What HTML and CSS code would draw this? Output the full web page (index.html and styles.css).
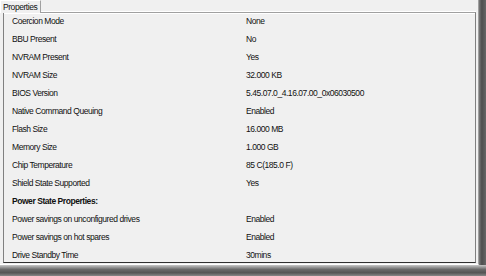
FILE: index.html
```html
<!DOCTYPE html>
<html lang="en">
<head>
    <meta charset="UTF-8">
    <title>Properties</title>
    <link rel="stylesheet" href="styles.css">
</head>
<body>
    <div class="screen">
        <div class="window">
            <!-- Tab strip -->
            <div class="tabs">
                <span class="tab">Properties</span>
            </div>

            <!-- Property list -->
            <div class="panel">
                <div class="row"><span class="label">Coercion Mode</span><span class="value">None</span></div>
                <div class="row"><span class="label">BBU Present</span><span class="value">No</span></div>
                <div class="row"><span class="label">NVRAM Present</span><span class="value">Yes</span></div>
                <div class="row"><span class="label">NVRAM Size</span><span class="value">32.000 KB</span></div>
                <div class="row"><span class="label">BIOS Version</span><span class="value">5.45.07.0_4.16.07.00_0x06030500</span></div>
                <div class="row"><span class="label">Native Command Queuing</span><span class="value">Enabled</span></div>
                <div class="row"><span class="label">Flash Size</span><span class="value">16.000 MB</span></div>
                <div class="row"><span class="label">Memory Size</span><span class="value">1.000 GB</span></div>
                <div class="row"><span class="label">Chip Temperature</span><span class="value">85 C(185.0 F)</span></div>
                <div class="row"><span class="label">Shield State Supported</span><span class="value">Yes</span></div>
                <div class="row heading"><span class="label">Power State Properties:</span></div>
                <div class="row"><span class="label">Power savings on unconfigured drives</span><span class="value">Enabled</span></div>
                <div class="row"><span class="label">Power savings on hot spares</span><span class="value">Enabled</span></div>
                <div class="row"><span class="label">Drive Standby Time</span><span class="value">30mins</span></div>
            </div>
        </div>
        <div class="shadow-right"></div>
        <div class="shadow-bottom"></div>
    </div>
</body>
</html>
```

FILE: styles.css
```css
/* General Reset */
* {
    margin: 0;
    padding: 0;
    box-sizing: border-box;
    font-family: "Liberation Sans", Arial, sans-serif;
}

body {
    background-color: #f0f0f0;
}

/* Outer frame with the drop shadow strips */
.screen {
    width: 486px;
    height: 276px;
    display: grid;
    grid-template-columns: 479px 7px;
    grid-template-rows: 265px 11px;
}

.window {
    background-color: #f0f0f0;
    display: flex;
    flex-direction: column;
    border-right: 1px solid #a0a0a0;
    border-bottom: 1px solid #ffffff;
}

.shadow-right {
    background: linear-gradient(to right, #7a7a7a, #4e4e4e 40%, #666666);
}

.shadow-bottom {
    grid-column: 1 / 3;
    background: linear-gradient(to bottom, #c8c8c8, #6a6a6a 40%, #555555 70%, #888888);
}

/* Tabs */
.tabs {
    height: 12px;
    display: flex;
}

.tab {
    width: 41px;
    height: 13px;
    padding-left: 2px;
    font-size: 8.5px;
    line-height: 12px;
    letter-spacing: -0.45px;
    color: #111;
    background-color: #f0f0f0;
    border-top: 1px solid #ffffff;
    border-left: 1px solid #ffffff;
    border-right: 1px solid #a0a0a0;
    position: relative;
    z-index: 1;
}

/* Panel */
.panel {
    margin-left: 3px;
    width: 473px;
    height: 251px;
    overflow: hidden;
    border-top: 1px solid #a0a0a0;
    border-left: 1px solid #808080;
    border-right: 1px solid #808080;
    border-bottom: 1px solid #303030;
    box-shadow: 0 -1px 0 #ffffff, inset 0 1px 0 #ffffff;
    padding-top: 1px;
}

.row {
    display: flex;
    height: 18px;
    line-height: 15px;
    padding-bottom: 3px;
    font-size: 8.5px;
    letter-spacing: -0.45px;
    color: #111;
}

.label {
    width: 242px;
    padding-left: 8px;
}

.heading .label {
    font-weight: bold;
}
```
